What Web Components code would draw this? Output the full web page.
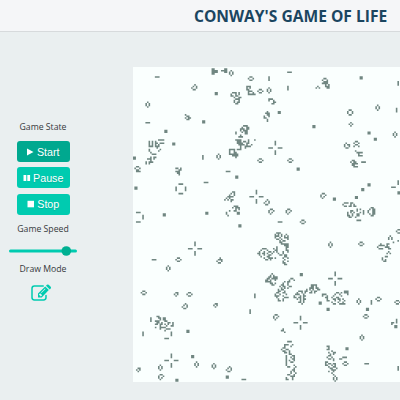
<!DOCTYPE html>
<html lang="en">
<head>
<meta charset="utf-8">
<title>Conway's Game of Life</title>
<style>
html,body{margin:0;height:100%;overflow:hidden;background:#eaeff0}
body{font-family:"Open Sans","Noto Sans",sans-serif;color:#36393b}
</style>
</head>
<body>
<life-app></life-app>
<script>
class LifeHeader extends HTMLElement{
  constructor(){super();this.attachShadow({mode:'open'}).innerHTML=`<style>
  :host{display:flex;box-sizing:border-box;height:32px;padding:0 0 0 194px;background:#f5f6f8;border-bottom:1px solid #d7dadc}
  h1{margin:0;font-size:15.6px;line-height:32px;font-weight:700;color:#1b4560;white-space:nowrap}
  </style><h1><slot></slot></h1>`}
}
customElements.define('life-header',LifeHeader);

class ControlLabel extends HTMLElement{
  constructor(){super();this.attachShadow({mode:'open'}).innerHTML=`<style>
  :host{display:block;height:14px;font-size:8.7px;line-height:14px;text-align:center;white-space:nowrap}
  </style><slot></slot>`}
}
customElements.define('control-label',ControlLabel);

class LifeButton extends HTMLElement{
  constructor(){super();
  const icons={start:'<path d="M1 .5 7.5 4 1 7.5z"/>',pause:'<path d="M.5 1h2.8v6H.5zM4.3 1h2.8v6H4.3z"/>',stop:'<path d="M.5 .8H7V7.3H.5z"/>'};
  this.attachShadow({mode:'open'}).innerHTML=`<style>
  :host{display:block}
  button{display:flex;align-items:center;justify-content:center;gap:2.5px;width:53px;height:21px;padding:0;border:0;border-radius:3px;background:#00cbb0;color:#fff;font:10.7px "Liberation Sans",Arial,sans-serif;text-shadow:0 1px 1px #008a7a66}
  :host([active]) button{background:#00a88f}
  svg{width:8px;height:8px;fill:#fff;flex:none}
  </style><button><svg viewBox="0 0 8 8">${icons[this.getAttribute('icon')]}</svg><span><slot></slot></span></button>`}
}
customElements.define('life-button',LifeButton);

class SpeedSlider extends HTMLElement{
  constructor(){super();this.attachShadow({mode:'open'}).innerHTML=`<style>
  :host{display:block;width:68px;height:10px}svg{display:block}
  </style><svg width="68" height="10"><rect y="3.5" width="68" height="3" rx="1.5" fill="#00cbb0"/><circle cx="57.3" cy="5" r="4.8" fill="#00b092"/></svg>`}
}
customElements.define('speed-slider',SpeedSlider);

class DrawToggle extends HTMLElement{
  constructor(){super();this.attachShadow({mode:'open'}).innerHTML=`<style>
  :host{display:block;width:21px;height:18px}svg{display:block}
  </style><svg width="21" height="18" viewBox="0 0 21 18"><path d="M12.2 2H3.4Q1 2 1 4.4v9.2Q1 16 3.4 16h9.2q2.4 0 2.4-2.4v-2.2" fill="none" stroke="#00cbb0" stroke-width="1.5" stroke-linecap="round"/><path fill="#00cbb0" fill-rule="evenodd" d="M7 13.4V9.6L14.2 2.5 17.8 6.1 10.7 13.4zM8.1 10.2v1h1v1.1h1l1.1-1.1-2-2zM10 8.6 14 4.6l.5.5-4 4zM15 1.7l.9-.9q.9-.8 1.8 0l2 2q.8.9 0 1.8l-.9.9z"/></svg>`}
}
customElements.define('draw-toggle',DrawToggle);

const CELL=1.575;
const STILL={
  h:'###',v:'#/#/#',b:'##/##',e:'.##./#..#/.##.',n:'.#./#.#/#.#/.#.',
  l:'..#./.#.#/#..#/.##.',m:'.##./#..#/#.#./.#..',t:'.#./#.#/.#.',o:'.##/#.#/.#.',g:'##./#.#/#..',
  p:'....#..../....#..../....#..../........./###...###/........./....#..../....#..../....#....',
  q:'..###../......./#.....#/#.....#/#.....#/......./..###..',
  r:'.##./#..#/#..#/.##.'
};
/* Each tile: origin on the page, then "kind x y" centres in thirds of a pixel. */
const TILES=[
 [130,60,'h 83 51,l 195 82,n 55 133,b 260 100,b 222 185,h 55 187,b 109 214,b 132 251,b 14 294,v 220 292,e 24 324,n 268 292'],
 [220,60,'n 35 37,e 94 55,v 148 55,h 210 37,v 205 83,e 120 93,n 148 91,b 179 157,p 167 263,e 122 301,e 212 301,b 236 327'],
 [310,60,'b 154 53,v 265 69,r 122 157,n 204 143,v 261 150,t 124 193,b 13 200,b 178 218,b 197 237,n 257 223,h 162 306'],
 [130,170,'b 19 54,q 154 56,h 229 38,h 26 127,v 40 141,h 26 156,b 104 134,b 232 129,p 196 236,h 73 269,e 147 269,n 116 295,e 268 273'],
 [220,170,'h 26 4,b 51 20,p 111 80,l 141 96,m 156 124,m 207 125,h 181 156,e 250 156,b 61 168,b 245 314'],
 [310,170,'m 41 76,b 74 87,b 179 44,b 159 58,b 140 83,h 251 51,v 265 38,b 268 69,n 62 224,e 154 222,v 77 312,h 63 325,h 91 325'],
 [130,280,'e 43 38,o 139 42,e 180 43,l 166 79,o 257 77,v 64 118,v 41 161,v 125 161,h 111 175,b 175 154,p 125 241,b 189 230,n 201 254,n 253 258,n 92 263,o 26 269,m 96 291,b 142 300'],
 [220,280,'v 106 47,v 92 95,m 169 112,p 243 128,l 29 268,b 23 291,h 73 298'],
 [310,280,'v 77 10,b 32 69,b 55 88,n 148 64,v 185 67,e 207 57,e 264 67,b 174 88,e 169 109,n 157 173,b 112 206,h 171 251,v 268 267,n 77 298']
];
/* Active regions: tile origin, top-left in thirds of a pixel, rows of cells. */
const SWARMS=[
 [130,60,246,25,'##./####/####/##.'],
 [220,60,4,27,'..##/####/..##'],
 [130,60,164,162,'#.../.##./#.##/.##.'],
 [130,60,55,238,'......####/#.#.#...../#.#.##.###/#.#.#.#.../###.###.../.....#..../#......#../#.....#.../.#......../..###.....'],
 [130,60,48,288,'...#.##/.###.#./...#.../#.###../#.#....'],
 [130,60,138,325,'##.#/..##'],
 [220,60,80,77,'###.../#.#.../##..../.###../.#..#./.#####'],
 [220,60,34,95,'.###.#./#..#.#./##.##../..#..##/...###./..#..#./..#.##./...##..'],
 [220,60,148,115,'###../#..#./...##/..##.'],
 [220,60,134,154,'..#./.###/..##/#..#/##../..#./..#.'],
 [220,60,61,197,'..###./.#..##/###.##/#.###./.#.##./...##.'],
 [220,60,47,215,'#...../#...../...#../..###./....../####../.###.#/......'],
 [220,60,53,240,'.......#...#/##..##.#.../####..##.../.####.#..#./..#..####../..#..#...../###......../'],
 [220,60,28,264,'####../#..#../#..##./######/..####/....#.'],
 [310,60,35,54,'.##../#..#./.###./####./..#.#/..###/...##'],
 [310,60,18,78,'.#./#.#'],
 [310,60,102,247,'.#../#.##/#..#/.##.'],
 [310,60,133,242,'.##./#..#/.##./#..#'],
 [310,60,136,270,'#..../.####/..#../..###'],
 [310,60,121,299,'.##../#.##./.####/.##../..###'],
 [130,170,137,0,'###/.##/..#'],
 [130,170,18,0,'###'],
 [220,170,14,64,'.....##/....#.#/...#..#/..####./.#.#.../#.#.##./....#..'],
 [220,170,20,106,'.....###./....#.###/......#.#/..#..##../#......##/#......##/.#.......'],
 [220,170,164,187,'.###...../#.#.#..#./###.#.#.#/#..#..###/.##.#...#/...#.##../...##..../....#####/......###/........#'],
 [220,170,160,230,'..#.....#./#.#.....#./.##.....##/#.#...#..#/...#..#.../....##.##./.......##./.#....#..#/.......#../......#..#/......##../.......##.'],
 [220,170,113,234,'...###..../..#...#.../.#..#..##./##.##.#..#/.#..#..##./..#...##../....#..###/.....##.#.'],
 [220,170,0,262,'#./.#/.#/#.'],
 [220,170,138,308,'....#.../...#.#../..##.###/.##.####/##.#..#.'],
 [220,170,207,324,'.##/#..#'],
 [310,170,98,97,'.###.##../#....#.#./.##.##.##'],
 [310,170,110,117,'......#.#/..##..#../#.#.#...#/#..#..##./##.#..##./.##..#.../........./......###'],
 [310,170,160,120,'#/#/#'],
 [310,170,174,110,'..##./.#.##/#..##/#..##/.#.##/..##.'],
 [310,170,202,197,'........#./.......#.#/.......#.#/........../..........#/..#...##../.####.#.../#....###../.###...##./........../.......#../......#.#./........../.....##.../...#...../...#.#..../....##....'],
 [310,170,259,178,'.##/#../.##'],
 [310,170,264,210,'#'],
 [130,280,78,107,'.##....../..##.##../...#.##../###...##../.##.#...##.#/##.##.#.#..#/...#...#..##/#..####...../...#...###../......#.....'],
 [220,280,137,4,'####.../...##.#/....##.'],
 [220,280,165,1,'......#.##../.....#..#../....##..#../...#.##..##/....#.#.#.../..#.##...../..##..#..../.##..##...../#..#...#..../###..#....../.#....###../..#..#....../..##.#......'],
 [220,280,222,25,'........#/...###.##/..#..#.#./.###..#../#...#.##./##.##.#../..#.#.##./....#.#../...##.#../.....#...'],
 [310,280,0,14,'.####../.##.#../###.##./#.#..##/.#.##../##.#...'],
 [310,280,37,42,'###.../#..#../..##../...#../...##.'],
 [310,280,65,32,'........###/...##.#.###/..#..#....#/.#....#..../#..##....../.##.##.#.../..#..#..#../#...#..#.../.##..####..'],
 [310,280,246,118,'...#/...#/##.#/#.../..##/..##'],
 [220,280,184,147,'.#./##./..#'],
 [220,280,184,184,'....###../........./..###..#./..#...#../.##....../#..##..../.##..#.../..##.#...'],
 [220,280,198,222,'..##.../#...##./#..#.#./#...##./#.#..#./#..##../#....../#....#./.##...#/.....#./....##./...#.#./...#..#/.##..#./...###./#...#../##..#..'],
 [310,280,46,198,'.##...../..#...../.##...../....#.../..#..##./...#.#../..##..../.#..#.../..##.#../.....#../##....../#.##.##./##..#.#./..#..##./...##..#/....###./..#..#../....#.../.....#..'],
 [310,280,89,232,'..###/##...'],
 [310,280,100,246,'.##./#..#/.##.']
];
class LifeBoard extends HTMLElement{
  constructor(){super();
  let d='';const filled=new Set();
  const stamp=(col,row,pattern)=>pattern.split('/').forEach((line,y)=>[...line].forEach((c,x)=>{
    if(c==='#'&&row+y>=0&&row+y<200)filled.add((col+x)+','+(row+y));
  }));
  TILES.forEach(([ox,oy,list])=>list.split(',').forEach(item=>{
    const [k,x,y]=item.split(' '),p=STILL[k],rows=p.split('/');
    stamp(Math.round((ox+x/3-133.2)/CELL-rows[0].length/2),Math.round((oy+y/3-66.8)/CELL-rows.length/2),p);
  }));
  SWARMS.forEach(([ox,oy,x,y,p])=>stamp(Math.round((ox+x/3-133.2)/CELL),Math.round((oy+y/3-66.8)/CELL),p));
  filled.forEach(key=>{const [x,y]=key.split(',');d+=`M${(x*CELL).toFixed(2)} ${(y*CELL).toFixed(2)}h1.58v1.58h-1.58z`});
  this.attachShadow({mode:'open'}).innerHTML=`<style>
  :host{display:block;width:267px;height:315px;background:#fafffe;overflow:hidden}svg{display:block}
  </style><svg width="267" height="315" viewBox="0.2 0.2 267 315"><path d="${d}" fill="#708681"/></svg>`}
}
customElements.define('life-board',LifeBoard);

class LifeControls extends HTMLElement{
  constructor(){super();this.attachShadow({mode:'open'}).innerHTML=`<style>
  :host{display:flex;flex-direction:column;align-items:center;width:86px;padding-top:88px}
  .buttons{display:flex;flex-direction:column;gap:5.4px;margin:7px 0 7px}
  speed-slider{margin:10px 0 6px}
  draw-toggle{margin:8px 0 0 -3px}
  </style><control-label>Game State</control-label>
  <div class="buttons"><life-button icon="start" active>Start</life-button><life-button icon="pause">Pause</life-button><life-button icon="stop">Stop</life-button></div>
  <control-label>Game Speed</control-label><speed-slider></speed-slider>
  <control-label>Draw Mode</control-label><draw-toggle></draw-toggle>`}
}
customElements.define('life-controls',LifeControls);

class LifeApp extends HTMLElement{
  constructor(){super();this.attachShadow({mode:'open'}).innerHTML=`<style>
  :host{display:block;width:400px;height:400px;overflow:hidden}
  main{display:grid;grid-template-columns:133px 267px;align-items:start}
  life-board{margin-top:35px}
  </style><life-header>CONWAY'S GAME OF LIFE</life-header><main><life-controls></life-controls><life-board></life-board></main>`}
}
customElements.define('life-app',LifeApp);
</script>
</body>
</html>
